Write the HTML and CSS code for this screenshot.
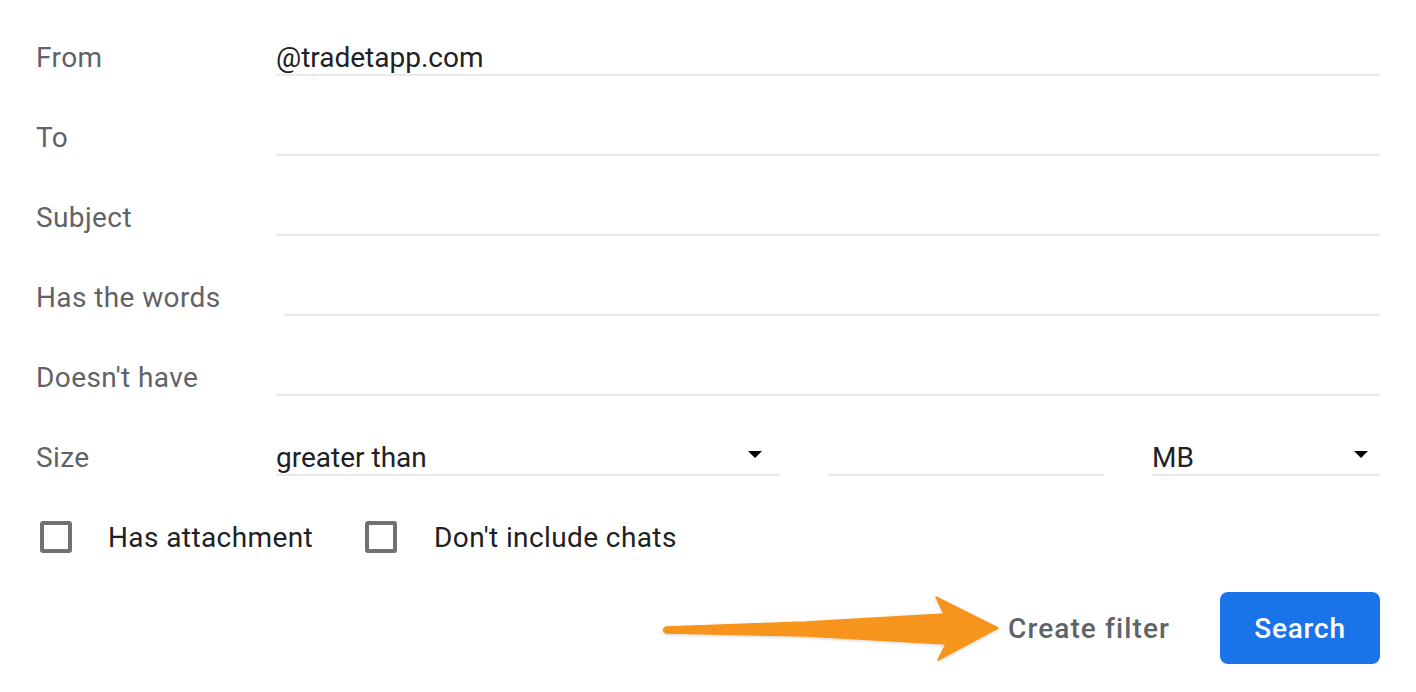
FILE: index.html
```html
<!DOCTYPE html>
<html lang="en">
<head>
<meta charset="utf-8">
<title>Search options</title>
<link rel="stylesheet" href="styles.css">
</head>
<body>
<div class="panel">
  <div class="row">
    <div class="label">From</div>
    <div class="field"><span class="value">@tradetapp.com</span></div>
  </div>
  <div class="row">
    <div class="label">To</div>
    <div class="field"></div>
  </div>
  <div class="row">
    <div class="label">Subject</div>
    <div class="field"></div>
  </div>
  <div class="row">
    <div class="label">Has the words</div>
    <div class="field field--shift"></div>
  </div>
  <div class="row">
    <div class="label">Doesn't have</div>
    <div class="field"></div>
  </div>
  <div class="row">
    <div class="label">Size</div>
    <div class="size-group">
      <div class="field select select--op"><span class="value">greater than</span><span class="caret"></span></div>
      <div class="field number"></div>
      <div class="field select select--unit"><span class="value">MB</span><span class="caret"></span></div>
    </div>
  </div>
  <div class="row checks">
    <label class="check"><span class="box"></span><span class="check-text">Has attachment</span></label>
    <label class="check"><span class="box"></span><span class="check-text">Don't include chats</span></label>
  </div>
  <div class="actions">
    <button class="btn-text">Create filter</button>
    <button class="btn-primary">Search</button>
  </div>
  <svg class="annotation" width="350" height="80" viewBox="0 0 350 80" aria-hidden="true">
    <defs>
      <filter id="sh" x="-10%" y="-30%" width="120%" height="160%">
        <feDropShadow dx="0" dy="1" stdDeviation="1.5" flood-color="#000" flood-opacity="0.18"/>
      </filter>
    </defs>
    <path d="M10 37 Q5 40 10 43 L150 46 L290 54 L282 70 L342 38 L280 7 L288 24 L150 32 Z" fill="#f7941e" stroke="#f7941e" stroke-width="1.5" stroke-linejoin="round" filter="url(#sh)"/>
  </svg>
</div>
</body>
</html>
```
FILE: styles.css
```css
* { box-sizing: border-box; }
html, body { margin: 0; padding: 0; background: #fff; }
body {
  font-family: Roboto, "Liberation Sans", Arial, sans-serif;
  font-size: 28px;
  color: #202124;
}
.panel {
  position: relative;
  padding: 17px 36px 0 36px;
  width: 1416px;
  height: 692px;
}
.row {
  display: flex;
  align-items: center;
  height: 80px;
}
.label {
  width: 240px;
  flex: none;
  color: #5f6368;
  letter-spacing: 0.4px;
}
.field {
  flex: 1;
  height: 40px;
  border-bottom: 2px solid #e8eaed;
  display: flex;
  align-items: center;
  transform: translateY(-1px);
}
.field--shift { margin-left: 8px; }
.value { color: #202124; line-height: 36px; margin-top: 6px; }
.size-group {
  flex: 1;
  display: flex;
  gap: 48px;
}
.select { justify-content: space-between; padding-right: 18px; }
.select--op { flex: none; width: 504px; }
.number { flex: none; width: 276px; }
.select--unit { flex: none; width: 228px; padding-right: 12px; }
.caret {
  width: 0; height: 0;
  border-left: 7px solid transparent;
  border-right: 7px solid transparent;
  border-top: 7px solid #000;
  margin-top: -2px;
}
.check {
  display: flex;
  align-items: center;
  margin-right: 52px;
}
.check:first-child { margin-left: 4px; }
.check-text { letter-spacing: 0.4px; }
.box {
  width: 32px;
  height: 32px;
  border: 4px solid #6f7174;
  border-radius: 3px;
  margin-right: 36px;
  flex: none;
}
.check:nth-child(2) .box { margin-right: 37px; }
.actions {
  margin-top: 15px;
  display: flex;
  justify-content: flex-end;
  align-items: center;
  height: 72px;
}
.btn-text, .btn-primary {
  font-family: Roboto, "Liberation Sans", Arial, sans-serif;
  font-size: 28px;
  font-weight: 500;
  border: none;
  cursor: pointer;
}
.btn-text {
  background: transparent;
  color: #5f6368;
  letter-spacing: 1.1px;
  padding: 0 24px;
  height: 72px;
  margin-right: 26px;
}
.btn-primary {
  background: #1a73e8;
  color: #fff;
  letter-spacing: 0.8px;
  height: 72px;
  width: 160px;
  border-radius: 8px;
  padding: 0;
}
.annotation {
  position: absolute;
  left: 656px;
  top: 590px;
  overflow: visible;
}
```
